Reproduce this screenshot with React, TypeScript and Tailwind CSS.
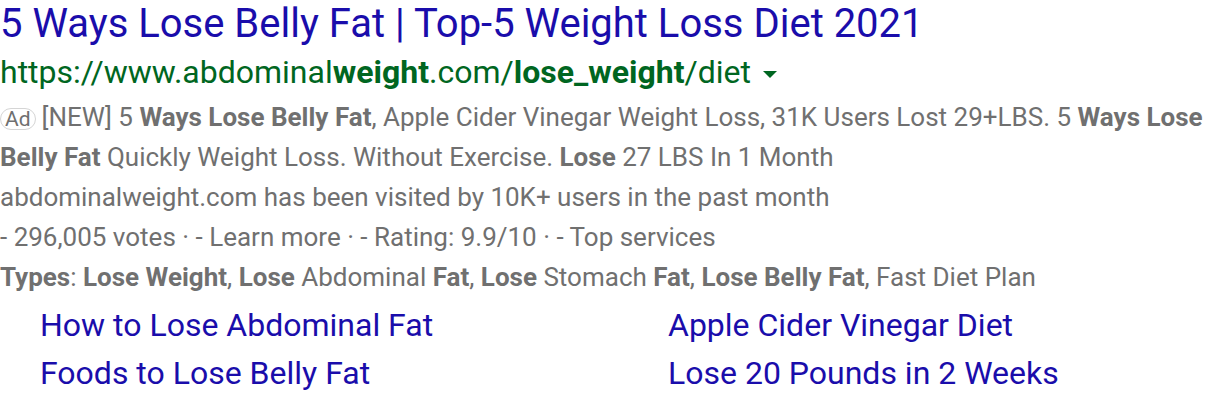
import { type ReactNode } from "react";

const B = ({ children }: { children: ReactNode }) => (
  <b className="font-bold">{children}</b>
);

const sitelinks = [
  "How to Lose Abdominal Fat",
  "Apple Cider Vinegar Diet",
  "Foods to Lose Belly Fat",
  "Lose 20 Pounds in 2 Weeks",
];

export default function App() {
  return (
    <div
      className="w-[1216px] h-[402px] overflow-hidden bg-white"
      style={{ fontFamily: "Roboto, 'Liberation Sans', sans-serif" }}
    >
      <h3 className="text-[40px] leading-[48px] text-[#1a0dab] whitespace-nowrap">
        5 Ways Lose Belly Fat | Top-5 Weight Loss Diet 2021
      </h3>

      {/* url */}
      <div className="flex items-center text-[32px] leading-[48px] text-[#006621] whitespace-nowrap">
        <span>
          https://www.abdominal<B>weight</B>.com/<B>lose_weight</B>/diet
        </span>
        <span className="ml-[12px] mt-[4px] w-0 h-0 border-l-[7px] border-r-[7px] border-t-[7px] border-l-transparent border-r-transparent border-t-[#006621]" />
      </div>

      {/* description */}
      <div className="mt-[1px] w-[1210px] text-[26px] leading-[40px] text-[#707070]">
        <p>
          <span className="inline-block h-[22px] px-[4px] mr-[6px] rounded-full border border-[#d5d5d5] text-[21px] leading-[20px] text-[#707070] align-baseline">
            Ad
          </span>
          [NEW] 5 <B>Ways Lose Belly Fat</B>, Apple Cider Vinegar Weight Loss,
          31K Users Lost 29+LBS. 5 <B>Ways Lose Belly Fat</B> Quickly Weight
          Loss. Without Exercise. <B>Lose</B> 27 LBS In 1 Month
        </p>
        <p>abdominalweight.com has been visited by 10K+ users in the past month</p>
        <p>
          - 296,005 votes · - Learn more · - Rating: 9.9/10 · - Top services
        </p>
        <p>
          <B>Types</B>: <B>Lose Weight</B>, <B>Lose</B> Abdominal <B>Fat</B>,{" "}
          <B>Lose</B> Stomach <B>Fat</B>, <B>Lose Belly Fat</B>, Fast Diet Plan
        </p>
      </div>

      {/* sitelinks */}
      <div className="grid grid-cols-[628px_1fr] pl-[40px] mt-[4px] text-[32px] leading-[48px] text-[#1a0dab]">
        {sitelinks.map((s) => (
          <a key={s} className="whitespace-nowrap">
            {s}
          </a>
        ))}
      </div>
    </div>
  );
}
